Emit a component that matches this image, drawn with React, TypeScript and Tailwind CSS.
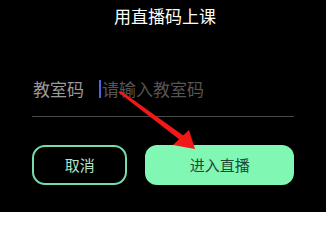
export default function App() {
  return (
    <div
      className="relative w-[326px] h-[212px] bg-black overflow-hidden"
      style={{ fontFamily: '"Noto Sans CJK SC", "Noto Sans", sans-serif' }}
    >
      {/* Title */}
      <div className="pt-[4px] pl-[4px] text-center text-[17px] leading-[24px] text-white">
        用直播码上课
      </div>

      {/* Input row */}
      <div className="mx-[32px] mt-[49px] border-b border-[#4a4a4a] pb-[15px]">
        <div className="flex items-center h-[24px] text-[17px] leading-[24px]">
          <span className="pl-[1px] text-[#9a9a9a]">教室码</span>
          <span className="ml-[15px] w-[2px] h-[18px] bg-[#4f63e0]" />
          <span className="ml-[1px] text-[#555555]">请输入教室码</span>
        </div>
      </div>

      {/* Buttons */}
      <div className="mx-[32px] mt-[28px] flex gap-[18px]">
        <button className="w-[97px] h-[40px] rounded-[13px] border-2 border-[#74dcae] text-[15px] text-[#b3e3c8]">
          取消
        </button>
        <button className="w-[151px] h-[40px] rounded-[12px] bg-[#80f7b3] text-[15px] text-[#1f4a33]">
          进入直播
        </button>
      </div>

      {/* Red arrow annotation */}
      <svg
        className="absolute left-0 top-0 pointer-events-none"
        width="326"
        height="212"
        viewBox="0 0 326 212"
      >
        <polygon points="118,92 121,91 184,136 180,140" fill="#f01818" />
        <polygon points="195,149 173,145 189,130" fill="#f01818" />
      </svg>
    </div>
  );
}
